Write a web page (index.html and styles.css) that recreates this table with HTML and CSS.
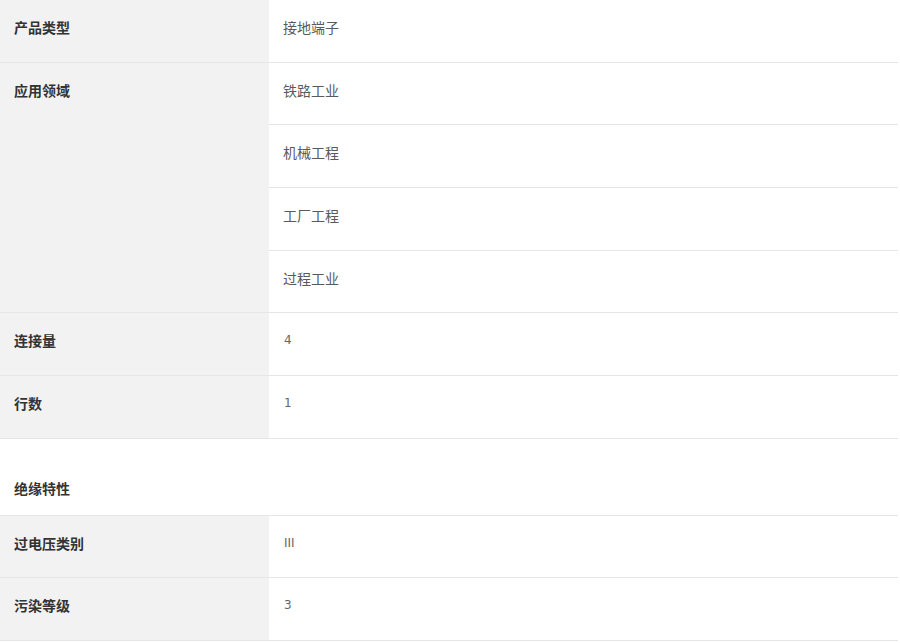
FILE: index.html
```html
<!DOCTYPE html>
<html lang="zh-CN">
<head>
<meta charset="utf-8">
<title>规格</title>
<link rel="stylesheet" href="styles.css">
</head>
<body>
<div class="spec">
  <div class="row">
    <div class="label">产品类型</div>
    <div class="values"><div class="value">接地端子</div></div>
  </div>
  <div class="row">
    <div class="label">应用领域</div>
    <div class="values">
      <div class="value sub">铁路工业</div>
      <div class="value sub">机械工程</div>
      <div class="value sub">工厂工程</div>
      <div class="value">过程工业</div>
    </div>
  </div>
  <div class="row">
    <div class="label">连接量</div>
    <div class="values"><div class="value num">4</div></div>
  </div>
  <div class="row">
    <div class="label">行数</div>
    <div class="values"><div class="value num">1</div></div>
  </div>
  <div class="section">绝缘特性</div>
  <div class="row">
    <div class="label">过电压类别</div>
    <div class="values"><div class="value num">III</div></div>
  </div>
  <div class="row">
    <div class="label">污染等级</div>
    <div class="values"><div class="value num">3</div></div>
  </div>
</div>
</body>
</html>
```

FILE: styles.css
```css
html, body {
  margin: 0;
  padding: 0;
  background: #ffffff;
}
body {
  font-family: "Noto Sans CJK SC", "Noto Sans", sans-serif;
  font-size: 14px;
}
.spec {
  width: 898px;
}
.row {
  display: flex;
  border-bottom: 1px solid #e6e6e6;
}
.label {
  width: 255px;
  flex: none;
  background: #f2f2f2;
  padding: 17px 0 0 14px;
  font-weight: 700;
  color: #333333;
  line-height: 20px;
}
.values {
  flex: 1;
  display: flex;
  flex-direction: column;
}
.value {
  height: 44.67px;
  padding: 17px 0 0 14px;
  line-height: 20px;
  color: #5a5a5a;
}
.value.sub {
  border-bottom: 1px solid #e6e6e6;
}
.value.num {
  font-family: "DejaVu Sans", "Noto Sans", sans-serif;
  font-size: 12px;
  color: #666666;
  padding-left: 15px;
}
.section {
  height: 37px;
  padding: 39px 0 0 14px;
  line-height: 20px;
  font-weight: 700;
  color: #333333;
  border-bottom: 1px solid #e6e6e6;
}
```
